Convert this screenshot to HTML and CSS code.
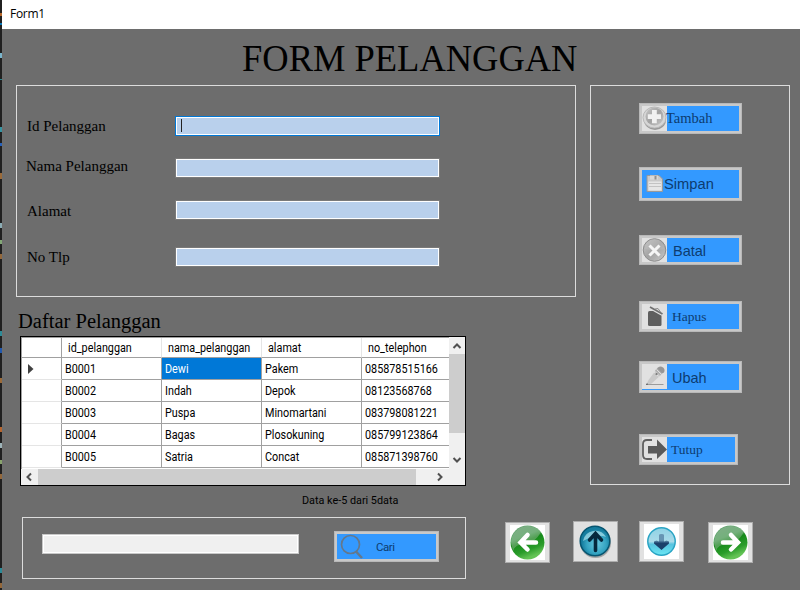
FILE: index.html
```html
<!DOCTYPE html>
<html lang="id">
<head>
<meta charset="utf-8">
<title>Form1</title>
<link rel="stylesheet" href="styles.css">
</head>
<body>
<div class="edge"></div>
<div class="window">
  <div class="titlebar">Form1</div>
  <h1><span>FORM PELANGGAN</span></h1>
  <main>
    <div class="left">
      <section class="panel form">
        <label class="f1"><span>Id Pelanggan</span><i class="field focus"><b class="caret"></b></i></label>
        <label class="f2"><span>Nama Pelanggan</span><i class="field"></i></label>
        <label class="f3"><span>Alamat</span><i class="field"></i></label>
        <label class="f4"><span>No Tlp</span><i class="field"></i></label>
      </section>
      <h2>Daftar Pelanggan</h2>
      <div class="grid">
        <div class="rows">
          <div class="row head"><div></div><div><span>id_pelanggan</span></div><div><span>nama_pelanggan</span></div><div><span>alamat</span></div><div><span>no_telephon</span></div></div>
          <div class="row"><div><svg class="mark" width="6" height="10" viewBox="0 0 6 10"><path d="M0 0L5.5 5L0 10Z" fill="#404040"/></svg></div><div><span>B0001</span></div><div class="sel"><span>Dewi</span></div><div><span>Pakem</span></div><div><span>085878515166</span></div></div>
          <div class="row"><div></div><div><span>B0002</span></div><div><span>Indah</span></div><div><span>Depok</span></div><div><span>08123568768</span></div></div>
          <div class="row"><div></div><div><span>B0003</span></div><div><span>Puspa</span></div><div><span>Minomartani</span></div><div><span>083798081221</span></div></div>
          <div class="row"><div></div><div><span>B0004</span></div><div><span>Bagas</span></div><div><span>Plosokuning</span></div><div><span>085799123864</span></div></div>
          <div class="row"><div></div><div><span>B0005</span></div><div><span>Satria</span></div><div><span>Concat</span></div><div><span>085871398760</span></div></div>
        </div>
        <div class="vbar">
          <svg width="16" height="17" viewBox="0 0 16 17"><path d="M4.500 11L8 7.500L11.500 11" fill="none" stroke="#505050" stroke-width="2"/></svg>
          <div class="vthumb"></div>
          <svg class="down" width="16" height="17" viewBox="0 0 16 17"><path d="M4.500 6L8 9.500L11.500 6" fill="none" stroke="#505050" stroke-width="2"/></svg>
        </div>
        <div class="hbar">
          <svg width="17" height="16" viewBox="0 0 17 16"><path d="M10 4.500L6.500 8L10 11.500" fill="none" stroke="#505050" stroke-width="2"/></svg>
          <div class="hthumb"></div>
          <svg class="next" width="17" height="16" viewBox="0 0 17 16"><path d="M8 4.500L11.500 8L8 11.500" fill="none" stroke="#505050" stroke-width="2"/></svg>
        </div>
      </div>
      <div class="count"><span>Data ke-5 dari 5data</span></div>
    </div>
    <section class="panel actions">
      <div class="btn tambah"><svg width="25" height="25" viewBox="0 0 25 25">
        <defs><linearGradient id="metal" x1="0" y1="0" x2="1" y2="1"><stop offset="0" stop-color="#c8c8c8"/><stop offset=".5" stop-color="#a2a2a2"/><stop offset="1" stop-color="#c9c9c9"/></linearGradient></defs>
        <rect width="25" height="25" fill="#e1e1e1"/><ellipse cx="13" cy="14" rx="11" ry="10" fill="#999"/><ellipse cx="12.500" cy="11.500" rx="11.500" ry="10.500" fill="#d6d6d6" stroke="#b8b8b8"/><circle cx="12.500" cy="10.500" r="9" fill="url(#metal)"/><path d="M10 4h4.800v4.300H19v4.600h-4.200v4.400H10v-4.400H5.800V8.300H10Z" fill="#f1f1f1"/></svg><span>Tambah</span></div>
      <div class="btn sans simpan"><svg width="25" height="28" viewBox="0 0 25 28">
        <path d="M5 5.500h12l3.500 3.500v12.500h-15.500v-16Z" fill="#c9c9c9" stroke="#999"/><path d="M8 5.500h8v4H8Z" fill="#d8d8d8"/><path d="M12.500 6h2v3.500h-2Z" fill="#909090"/><path d="M6.500 11.500h13v9h-13Z" fill="#e6e6e6"/><path d="M7 13.500h12M7 16.500h12" stroke="#c3c3c3"/></svg><span>Simpan</span></div>
      <div class="btn sans batal"><svg width="25" height="24" viewBox="0 0 25 24">
        <rect width="25" height="24" fill="#e1e1e1"/><circle cx="12.500" cy="12" r="11.300" fill="url(#metal)" stroke="#8d8d8d"/><path d="M2.500 11a10 10 0 0 1 20 0Q12 13 2.500 11Z" fill="#bdbdbd" opacity=".4"/><path d="M7.500 7.500l10 10M17.500 7.500l-10 10" stroke="#f5f5f5" stroke-width="3"/></svg><span>Batal</span></div>
      <div class="btn hapus"><svg width="25" height="25" viewBox="0 0 25 25">
        <rect width="25" height="25" fill="#e1e1e1"/><path d="M6 8.500q0-1.500 1.500-1.500h8l4 3.500v10q0 1.500-1.500 1.500H7.500q-1.500 0-1.500-1.500Z" fill="#5e5e5e"/><path d="M8 3L20.500 10" stroke="#e1e1e1" stroke-width="4"/><path d="M8 3L20.500 10" stroke="#707070" stroke-width="1.800"/><path d="M13 5l3-.5 2.500 3.500" fill="none" stroke="#8a8a8a"/></svg><span>Hapus</span></div>
      <div class="btn sans ubah"><svg width="25" height="25" viewBox="0 0 25 25">
        <rect width="25" height="25" fill="#e1e1e1"/><path d="M14 6l5 5-10 9-4.800 1L6.500 16Z" fill="#c9c9c9"/><path d="M15 4.500l5 5-2 2-5-5Z" fill="#b0b0b0"/><path d="M16 3.500q2.500-2 5 0t1 5l-2 1-5-5Z" fill="#969696"/><path d="M14.500 5.500l4.500 4.500M12 8l4.500 4.500" stroke="#ddd"/><circle cx="14.500" cy="10" r="1.100" fill="#777"/><path d="M4 20.500h17.500" stroke="#9b9b9b"/><path d="M4 21l1-2 1 1.500Z" fill="#555"/></svg><span>Ubah</span></div>
      <div class="btn tutup"><svg width="25" height="25" viewBox="0 0 25 25">
        <rect width="25" height="25" fill="#e1e1e1"/><path d="M10 3H5Q1 3 1 7v11q0 4 4 4h5" fill="none" stroke="#616161" stroke-width="1.800"/><path d="M6 9h9V2.500L25 12.500L15 22v-5.500H6Z" fill="#595959"/></svg><span>Tutup</span></div>
    </section>
  </main>
  <footer>
    <section class="panel search">
      <i class="query"></i>
      <div class="btn cari"><svg width="28" height="25" viewBox="0 0 28 25"><circle cx="13.500" cy="10.500" r="9" fill="none" stroke="#64788c" stroke-width="1.700"/><path d="M19 17.500l6 6.500" stroke="#64788c" stroke-width="2.500"/></svg><span>Cari</span></div>
    </section>
    <div class="nav n1"><svg width="35" height="35" viewBox="0 0 35 35">
      <defs><linearGradient id="green" x1="0" y1="0" x2=".4" y2="1"><stop offset="0" stop-color="#68a077"/><stop offset=".4" stop-color="#52a760"/><stop offset=".55" stop-color="#168a1a"/><stop offset=".8" stop-color="#2a9c2a"/><stop offset="1" stop-color="#63c355"/></linearGradient></defs>
      <rect width="35" height="35" fill="#fff"/><circle cx="17.500" cy="17.500" r="17" fill="url(#green)"/><path d="M1 17A17 17 0 0 1 31 7Q25 18 15 19Q5 19 3 26Z" fill="#9fbd9f" opacity=".45"/><path d="M26 17.500H12M17.500 10L10.500 17.500L17.500 24.500" fill="none" stroke="#fff" stroke-width="4.500" stroke-linecap="round"/></svg></div>
    <div class="nav n2"><svg width="35" height="35" viewBox="0 0 35 35">
      <defs><radialGradient id="teal" cx=".55" cy=".6"><stop offset="0" stop-color="#69c7df"/><stop offset=".65" stop-color="#35a4c2"/><stop offset="1" stop-color="#157c9e"/></radialGradient></defs>
      <ellipse cx="17.500" cy="18.500" rx="15.500" ry="15.500" fill="#a5a5a5"/><circle cx="17" cy="17" r="14.800" fill="url(#teal)" stroke="#075570" stroke-width="1.500"/><path d="M5 17A12.500 12.500 0 0 1 28 13Q19 9 5 17Z" fill="#b6e6f1" opacity=".65"/><path d="M17.500 26.500V11M11.500 16L17.500 9.500L23.500 16" fill="none" stroke="#06283d" stroke-width="3.600" stroke-linecap="round"/></svg></div>
    <div class="nav n3"><svg width="35" height="35" viewBox="0 0 35 35">
      <defs><linearGradient id="sky" x1="0" y1="0" x2="0" y2="1"><stop offset="0" stop-color="#8fd2e5"/><stop offset=".5" stop-color="#aadbe9"/><stop offset=".6" stop-color="#58c3df"/><stop offset="1" stop-color="#6ae7f4"/></linearGradient><linearGradient id="ink" x1="0" y1="0" x2="0" y2="1"><stop offset=".4" stop-color="#6795b3"/><stop offset=".58" stop-color="#1b416b"/></linearGradient></defs>
      <rect width="35" height="35" fill="#fff"/><circle cx="17.500" cy="17.500" r="13.700" fill="url(#sky)" stroke="#2aa4c4" stroke-width="1.500"/><path d="M15 11q0-1 2.500-1t2.500 1v6.500l2.500-1 2.500 1v2L17.500 26L10 19.500v-2l2.500-1 2.500 1Z" fill="url(#ink)"/></svg></div>
    <div class="nav n4"><svg width="35" height="35" viewBox="0 0 35 35">
      <rect width="35" height="35" fill="#fff"/><circle cx="17.500" cy="17.500" r="17" fill="url(#green)"/><path d="M1 17A17 17 0 0 1 31 7Q25 18 15 19Q5 19 3 26Z" fill="#9fbd9f" opacity=".45"/><path d="M10 17.500H24M18 10L25 17.500L18 24.500" fill="none" stroke="#fff" stroke-width="4.500" stroke-linecap="round"/></svg></div>
  </footer>
</div>
</body>
</html>
```
FILE: styles.css
```css
* { box-sizing: border-box; }
body { margin: 0; width: 800px; height: 590px; display: flex; overflow: hidden; background: #6d6d6d; color: #000; font-family: "Liberation Serif", serif; }
svg { display: block; flex: none; }
.edge { width: 2px; background:
  linear-gradient(transparent 13px, #b4662a 13px 16px, transparent 16px 23px, #0875b5 23px 25px, transparent 25px 53px, #7ab5cc 53px 58px, transparent 58px 79px, #2c8790 79px 80px, transparent 80px 127px, #3794a2 127px 132px, transparent 132px 143px, #2762bd 143px 146px, transparent 146px 173px, #9b6b3a 173px 179px, transparent 179px 223px, #8cadb5 223px 228px, transparent 228px 240px, #82a776 240px 244px, transparent 244px 254px, #94683b 254px 259px, transparent 259px 331px, #2d8b98 331px 336px, transparent 336px 348px, #2259ae 348px 353px, transparent 353px 378px, #9b6b3a 378px 383px, transparent 383px 427px, #b5652f 427px 432px, transparent 432px 443px, #9eb4b9 443px 448px, transparent 448px 460px, #88a36d 460px 464px, transparent 464px 474px, #94683b 474px 479px, transparent 479px 568px, #2d8b98 568px 573px, transparent 573px 583px, #94683b 583px 588px, transparent 588px), #202020; }
.window { width: 798px; }
.titlebar { height: 29px; padding-left: 8px; background: #fff; font: 12px/28px "Open Sans", sans-serif; letter-spacing: -.3px; }
h1 { margin: 0; height: 56px; padding: 7px 0 0 240px; font-size: 38px; line-height: 44px; font-weight: 400; white-space: nowrap; }
h1 span { display: inline-block; transform: scaleX(.96); transform-origin: left; }
main { display: flex; gap: 14px; height: 432px; padding-left: 14px; }
.left { width: 560px; }
.panel { border: 1px solid #dcdcdc; }
.form { height: 212px; padding: 30px 0 0 10px; }
label { display: flex; height: 20px; font-size: 15px; line-height: 20px; }
label span { width: 148px; }
.f2 { margin-top: 22px; }
.f2 span { margin: -2px 1px 0 -1px; }
.f3 { margin-top: 22px; }
.f3 span { margin-top: 1px; }
.f4 { margin-top: 27px; }
.field { width: 265px; height: 20px; padding: 2px 5px; border: 1px solid #7a7a7a; background: #b9d0ec; box-shadow: inset 0 0 0 1px #fff; }
.focus { border-color: #0078d7; }
.caret { display: block; width: 1px; height: 13px; background: #222; }
h2 { margin: 12px 0 0 2px; height: 27px; font-size: 20.5px; line-height: 25px; font-weight: 400; }
.grid { width: 446px; height: 150px; margin-left: 4px; border: 1px solid #000; background: #fff; display: grid; grid-template: 132px 16px / 428px 16px; font: 12px/14px Roboto, sans-serif; }
.rows { overflow: hidden; border: solid #a0a0a0; border-width: 1px 0 0 1px; }
.row { display: grid; grid-template-columns: 40px 100px 100px 100px 87px; height: 22px; }
.row div { border-right: 1px solid #a0a0a0; border-bottom: 1px solid #a0a0a0; padding: 4px 0 0 3px; white-space: nowrap; }
.row div:first-child { border-bottom-color: #e5e5e5; }
.row div:last-child { border-right: 0; }
.row span { display: inline-block; transform: scaleX(.9); transform-origin: left; }
.head { height: 20px; }
.row.head div { border-right-color: #e5e5e5; border-bottom-color: #a0a0a0; padding: 3px 0 0 6px; }
.row.head div:first-child { border-right-color: #a0a0a0; }
.row div.sel { background: #0078d7; color: #fff; }
.mark { margin: 2px 0 0 3px; }
.vbar { background: #f0f0f0; display: flex; flex-direction: column; }
.vthumb { height: 79px; background: #cdcdcd; }
.down { margin-top: auto; }
.hbar { grid-column: 1 / 3; display: flex; background: #f0f0f0; }
.hthumb { width: 378px; background: #cdcdcd; }
.next { margin-left: 14px; }
.count { margin: 7px 0 0 286px; font: 11.5px/14px Roboto, sans-serif; white-space: nowrap; }
.count span { display: inline-block; transform: scaleX(.94); transform-origin: left; }
.actions { width: 200px; height: 400px; padding: 17px 0 0 48px; }
.btn { display: flex; width: 103px; height: 31px; border: 3px solid #c8c8c8; outline: 1px solid #b8b8b8; outline-offset: -1px; background: #3399ff; color: #0d3c70; font-size: 14.5px; line-height: 24px; }
.sans { font-family: "Liberation Sans", sans-serif; }
.tambah span { margin-left: -1px; }
.simpan { height: 34px; margin-top: 33px; line-height: 29px; font-size: 14.7px; }
.simpan span { margin-left: -3px; }
.batal { height: 30px; margin-top: 34px; line-height: 26px; }
.batal span { margin-left: 6px; }
.hapus { margin-top: 36px; font-size: 13.5px; line-height: 25px; }
.hapus span { margin-left: 5px; }
.ubah { height: 32px; margin-top: 29px; line-height: 28px; }
.ubah span { margin-left: 5px; }
.tutup { width: 99px; margin-top: 41px; font-size: 13.5px; line-height: 25px; }
.tutup span { margin-left: 4px; }
footer { display: flex; align-items: flex-start; padding-left: 20px; }
.search { display: flex; width: 444px; height: 62px; padding: 13px 0 0 19px; }
.query { width: 257px; height: 20px; margin-top: 3px; border: 1px solid #c8c8c8; background: #f0f0f0; box-shadow: inset 0 0 0 1px #fff; }
.cari { width: 105px; margin-left: 35px; font: 11.5px/26px Roboto, sans-serif; }
.cari span { margin-left: 11px; letter-spacing: -.5px; }
.nav { width: 45px; height: 41px; border: 1px solid #adadad; background: #e1e1e1; display: flex; align-items: center; justify-content: center; }
.n1 { margin: 5px 0 0 39px; }
.n2 { margin: 4px 0 0 23px; }
.n3 { margin: 4px 0 0 21px; }
.n4 { margin: 5px 0 0 24px; }
```
